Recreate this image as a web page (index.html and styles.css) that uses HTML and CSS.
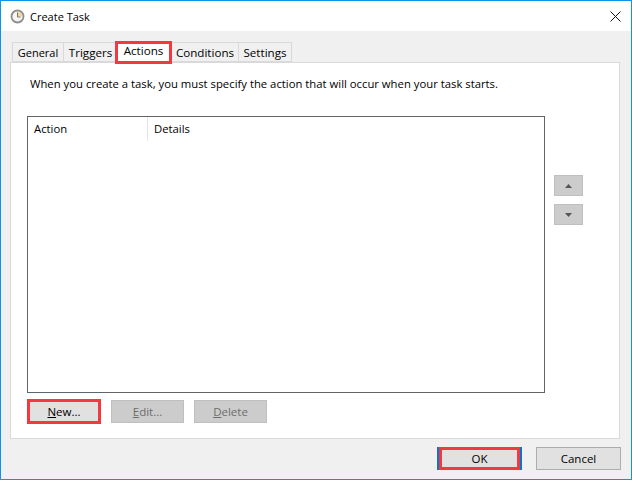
FILE: index.html
```html
<!DOCTYPE html>
<html lang="en">
<head>
<meta charset="utf-8">
<title>Create Task</title>
<link rel="stylesheet" href="styles.css">
</head>
<body>
<div class="window">
  <header class="titlebar">
    <svg class="clock" width="15" height="15" viewBox="0 0 15 15"><circle cx="7.500" cy="7.500" r="6" fill="#f6f5f0" stroke="#8f8f8f" stroke-width="1.800"/><path d="M7.500 7.500V2.500A5 5 0 0 1 12.500 7.500z" fill="#efd9a0"/><path d="M7.500 3.500v4.500h3" fill="none" stroke="#77776c" stroke-width="1"/></svg>
    <span class="title">Create Task</span>
    <svg class="close" width="11" height="11" viewBox="0 0 11 11"><path d="M.5.500l10 10M10.500.500l-10 10" stroke="#111" stroke-width="1" fill="none"/></svg>
  </header>
  <main class="body">
    <nav class="tabs">
      <span class="tab tab-general">General</span>
      <span class="tab tab-triggers">Triggers</span>
      <span class="tab tab-actions">Actions</span>
      <span class="tab tab-conditions">Conditions</span>
      <span class="tab tab-settings">Settings</span>
    </nav>
    <section class="panel">
      <p class="intro">When you create a task, you must specify the action that will occur when your task starts.</p>
      <div class="list-row">
        <div class="list">
          <div class="list-head">
            <span class="col col-action">Action</span>
            <span class="col col-details">Details</span>
          </div>
        </div>
        <div class="arrows">
          <button class="arrow" type="button"><svg width="7" height="4" viewBox="0 0 7 4"><path d="M3.500 0L7 4H0z" fill="#555"/></svg></button>
          <button class="arrow" type="button"><svg width="7" height="4" viewBox="0 0 7 4"><path d="M0 0h7L3.500 4z" fill="#555"/></svg></button>
        </div>
      </div>
      <div class="list-actions">
        <button class="btn btn-new" type="button"><u>N</u>ew...</button>
        <button class="btn btn-off" type="button"><u>E</u>dit...</button>
        <button class="btn btn-off" type="button"><u>D</u>elete</button>
      </div>
    </section>
    <footer class="footer">
      <button class="btn-main btn-ok" type="button">OK</button>
      <button class="btn-main" type="button">Cancel</button>
    </footer>
  </main>
</div>
</body>
</html>
```
FILE: styles.css
```css
* { box-sizing: border-box; }
html, body { margin: 0; padding: 0; }
body { width: 632px; height: 480px; overflow: hidden; font-family: "Open Sans", "Noto Sans", sans-serif; font-size: 11.3px; color: #000; }
.window { width: 632px; height: 480px; border: 1px solid #0a94ee; display: flex; flex-direction: column; background: #f0f0f0; }
.titlebar { height: 30px; background: #fff; display: flex; align-items: center; padding: 0 10px 0 9px; flex: none; }
.clock { flex: none; }
.title { margin-left: 5px; flex: 1; font-size: 11px; }
.body { flex: 1; display: flex; flex-direction: column; padding: 11px 10px 0 9px; }
.tabs { display: flex; height: 20px; flex: none; padding-left: 2px; position: relative; z-index: 1; }
.tab { height: 20px; background: #f0f0f0; border: 1px solid #d9d9d9; border-left: 0; display: flex; align-items: center; justify-content: center; font-size: 11.6px; }
.tab-general { width: 52px; border-left: 1px solid #d9d9d9; font-size: 11px; }
.tab-triggers { width: 53px; padding-left: 1px; }
.tab-actions { width: 57px; height: 23px; margin-top: -1px; margin-left: -2px; background: #fff; border: 3px solid #f03a3f; padding-bottom: 4px; }
.tab-conditions { width: 67px; }
.tab-settings { width: 53px; }
.panel { width: 610px; height: 377px; background: #fff; border: 1px solid #d9d9d9; padding: 12px 16px 0 16px; flex: none; }
.intro { margin: 0 0 0 3px; line-height: 17px; }
.list-row { display: flex; margin-top: 24px; }
.list { width: 518px; height: 277px; border: 1px solid #646464; flex: none; }
.list-head { display: flex; height: 24px; }
.col { display: flex; align-items: center; padding: 0 0 2px 6px; }
.col-action { width: 120px; border-right: 1px solid #e5e5e5; height: 24px; }
.arrows { display: flex; flex-direction: column; gap: 8px; margin: 59px 0 0 9px; }
.arrow { width: 29px; height: 21px; padding: 0; background: #ccc; border: 1px solid #bfbfbf; display: flex; align-items: center; justify-content: center; }
.list-actions { display: flex; gap: 10px; margin-top: 7px; }
.btn, .btn-main { font-family: inherit; font-size: 11.5px; color: #000; padding: 0; }
.btn { width: 73px; height: 23px; background: #ccc; border: 1px solid #bfbfbf; color: #6d6d6d; }
.btn u { text-underline-offset: 1px; }
.btn-new { width: 74px; height: 25px; margin-top: -1px; background: #e1e1e1; border: 3px solid #f03a3f; color: #000; }
.footer { display: flex; justify-content: flex-end; gap: 14px; padding: 8px 0 0; }
.btn-main { width: 85px; height: 23px; background: #e1e1e1; border: 1px solid #adadad; }
.btn-ok { border: 3px solid #f03a3f; box-shadow: -2px 0 0 #0078d7, 2px 0 0 #0078d7; width: 81px; margin-right: 2px; }
```
